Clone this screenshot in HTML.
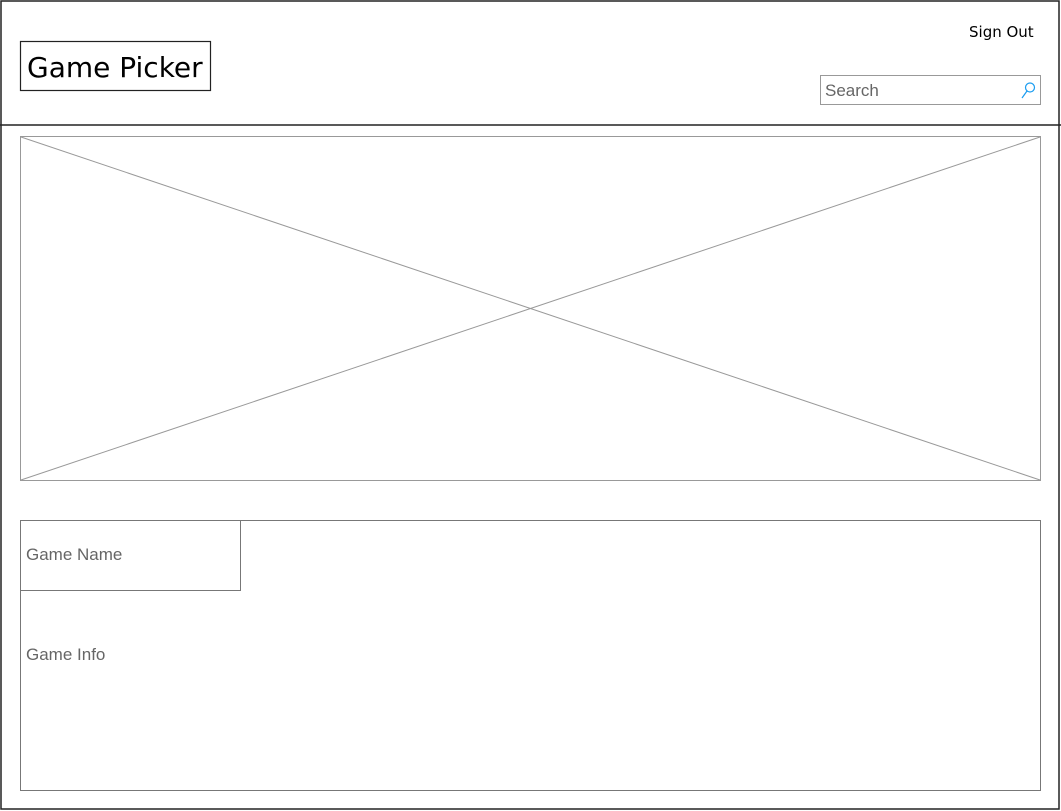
<!DOCTYPE html>
<html><head><style>
body{margin:0;width:1061px;height:811px;position:relative;background:#fff;overflow:hidden;font-family:"DejaVu Sans","Liberation Sans",sans-serif}
.a{position:absolute}
</style></head><body>
<svg class="a" style="left:0;top:0" width="1061" height="811">
<rect x="1" y="1" width="1058" height="808" fill="none" stroke="#222" stroke-width="1.5"/>
<line x1="0" y1="125" x2="1061" y2="125" stroke="#222" stroke-width="1.5"/>
<rect x="20.5" y="41.5" width="190" height="49" fill="none" stroke="#222" stroke-width="1.2"/>
<rect x="820.5" y="75.5" width="220" height="29" fill="none" stroke="#999"/>
<circle cx="1030" cy="87.5" r="4.5" fill="none" stroke="#1a9cf0" stroke-width="1.2"/>
<line x1="1027" y1="91" x2="1022" y2="98" stroke="#1a9cf0" stroke-width="1.2"/>
<rect x="20.5" y="136.5" width="1020" height="344" fill="none" stroke="#999"/>
<line x1="21" y1="137" x2="1040" y2="480" stroke="#999"/>
<line x1="21" y1="480" x2="1040" y2="137" stroke="#999"/>
<rect x="20.5" y="520.5" width="1020" height="270" fill="none" stroke="#777"/>
<rect x="20.5" y="520.5" width="220" height="70" fill="none" stroke="#777"/>
</svg>
<div class="a" style="left:27px;top:51px;font-size:28px;color:#000">Game Picker</div>
<div class="a" style="left:969px;top:23px;font-size:15px;color:#000">Sign Out</div>
<div class="a" style="left:825px;top:81px;font-size:17px;color:#666;font-family:'Liberation Sans',sans-serif">Search</div>
<div class="a" style="left:26px;top:545px;font-size:17px;color:#666;font-family:'Liberation Sans',sans-serif">Game Name</div>
<div class="a" style="left:26px;top:645px;font-size:17px;color:#666;font-family:'Liberation Sans',sans-serif">Game Info</div>
</body></html>
